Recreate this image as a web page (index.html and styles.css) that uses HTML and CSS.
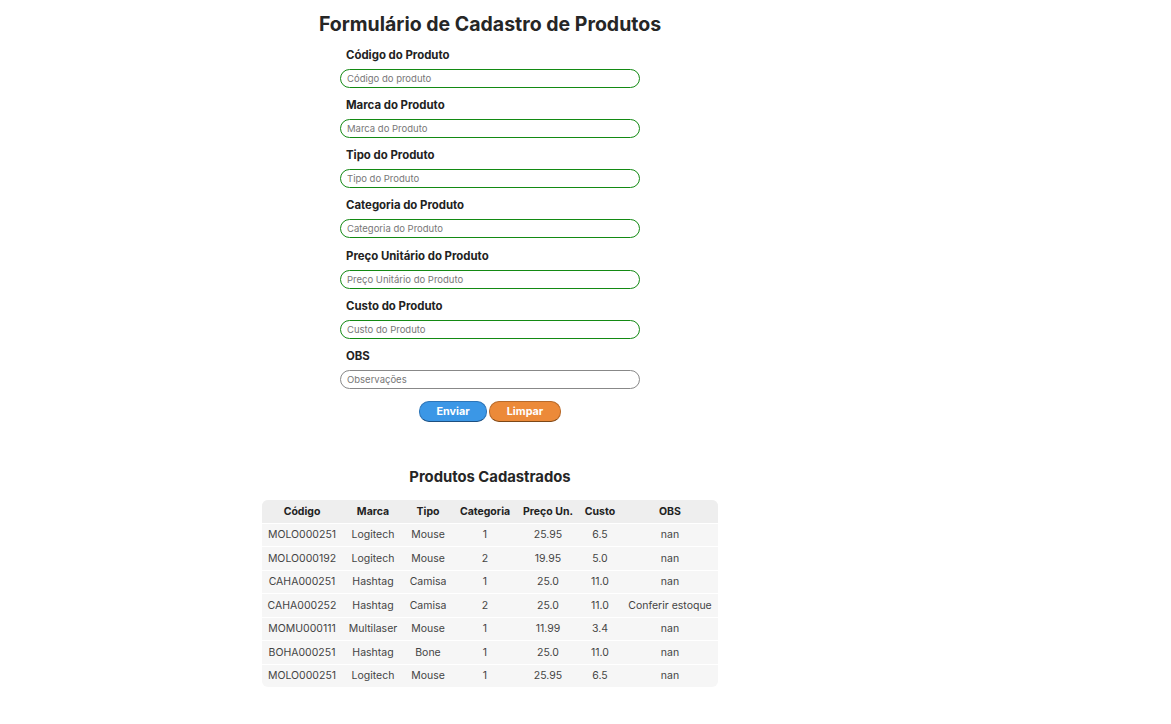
FILE: index.html
```html
<!DOCTYPE html>
<html lang="pt-BR">
<head>
<meta charset="utf-8">
<title>Formulário de Cadastro de Produtos</title>
<link rel="stylesheet" href="styles.css">
</head>
<body>
<main class="page">
  <h1 class="title">Formulário de Cadastro de Produtos</h1>
  <form class="form">
    <div class="field">
      <label class="label">Código do Produto</label>
      <input class="input valid" type="text" placeholder="Código do produto">
    </div>
    <div class="field">
      <label class="label">Marca do Produto</label>
      <input class="input valid" type="text" placeholder="Marca do Produto">
    </div>
    <div class="field">
      <label class="label">Tipo do Produto</label>
      <input class="input valid" type="text" placeholder="Tipo do Produto">
    </div>
    <div class="field">
      <label class="label">Categoria do Produto</label>
      <input class="input valid" type="text" placeholder="Categoria do Produto">
    </div>
    <div class="field">
      <label class="label">Preço Unitário do Produto</label>
      <input class="input valid" type="text" placeholder="Preço Unitário do Produto">
    </div>
    <div class="field">
      <label class="label">Custo do Produto</label>
      <input class="input valid" type="text" placeholder="Custo do Produto">
    </div>
    <div class="field">
      <label class="label">OBS</label>
      <input class="input" type="text" placeholder="Observações">
    </div>
    <div class="actions">
      <button type="button" class="btn btn-send">Enviar</button>
      <button type="button" class="btn btn-clear">Limpar</button>
    </div>
  </form>

  <h2 class="subtitle">Produtos Cadastrados</h2>
  <table class="table">
    <colgroup>
      <col style="width:80px"><col style="width:62px"><col style="width:48px"><col style="width:66px"><col style="width:60px"><col style="width:44px"><col style="width:96px">
    </colgroup>
    <thead>
      <tr><th>Código</th><th>Marca</th><th>Tipo</th><th>Categoria</th><th>Preço Un.</th><th>Custo</th><th>OBS</th></tr>
    </thead>
    <tbody>
      <tr><td>MOLO000251</td><td>Logitech</td><td>Mouse</td><td>1</td><td>25.95</td><td>6.5</td><td>nan</td></tr>
      <tr><td>MOLO000192</td><td>Logitech</td><td>Mouse</td><td>2</td><td>19.95</td><td>5.0</td><td>nan</td></tr>
      <tr><td>CAHA000251</td><td>Hashtag</td><td>Camisa</td><td>1</td><td>25.0</td><td>11.0</td><td>nan</td></tr>
      <tr><td>CAHA000252</td><td>Hashtag</td><td>Camisa</td><td>2</td><td>25.0</td><td>11.0</td><td>Conferir estoque</td></tr>
      <tr><td>MOMU000111</td><td>Multilaser</td><td>Mouse</td><td>1</td><td>11.99</td><td>3.4</td><td>nan</td></tr>
      <tr><td>BOHA000251</td><td>Hashtag</td><td>Bone</td><td>1</td><td>25.0</td><td>11.0</td><td>nan</td></tr>
      <tr><td>MOLO000251</td><td>Logitech</td><td>Mouse</td><td>1</td><td>25.95</td><td>6.5</td><td>nan</td></tr>
    </tbody>
  </table>
</main>
</body>
</html>
```
FILE: styles.css
```css
* { box-sizing: border-box; }
html, body { margin: 0; padding: 0; background: #fff; }
body {
  font-family: Inter, "Open Sans", "Liberation Sans", sans-serif;
  color: #222;
}
.page {
  width: 980px;
  display: flex;
  flex-direction: column;
  align-items: center;
  padding-top: 11px;
}
.title {
  margin: 0;
  font-size: 19.5px;
  line-height: 26px;
  font-weight: 700;
  color: #262626;
}
.form {
  width: 300px;
  display: flex;
  flex-direction: column;
  margin-top: 11px;
}
.field {
  display: flex;
  flex-direction: column;
  margin-bottom: 10.17px;
}
.label {
  font-size: 11.4px;
  line-height: 14px;
  font-weight: 700;
  padding-left: 6px;
  margin-bottom: 7px;
  color: #222;
}
.input {
  width: 300px;
  height: 19px;
  border: 1px solid #888;
  border-radius: 10px;
  padding: 0 6px;
  font-family: inherit;
  font-size: 9.5px;
  color: #333;
  background: #fff;
  outline: none;
}
.input.valid { border-color: #138a13; }
.input::placeholder { color: #777; }
.actions {
  display: flex;
  justify-content: center;
  gap: 2px;
  margin-top: 2px;
}
.btn {
  height: 21px;
  border-radius: 10px;
  font-family: inherit;
  font-size: 10.8px;
  font-weight: 700;
  color: #fff;
  padding: 0;
  cursor: pointer;
}
.btn-send {
  width: 68px;
  background: #3b97e6;
  border: 1px solid #2d75b8;
  border-bottom-color: #1d4f80;
}
.btn-clear {
  width: 72px;
  background: #ec8a39;
  border: 1px solid #b86a2a;
  border-bottom-color: #7d4818;
}
.subtitle {
  margin: 45px 0 0;
  font-size: 14.8px;
  line-height: 20px;
  font-weight: 700;
  color: #262626;
}
.table {
  margin-top: 13px;
  width: 456px;
  table-layout: fixed;
  border-collapse: separate;
  border-spacing: 0;
  background: #f6f6f6;
  border-radius: 6px;
  overflow: hidden;
  font-size: 10.5px;
}
.table th {
  background: #eeeeee;
  height: 22.5px;
  font-weight: 700;
  color: #222;
  text-align: center;
  padding: 0;
  white-space: nowrap;
}
.table td {
  height: 23.5px;
  border-top: 1.5px solid #fff;
  text-align: center;
  padding: 0;
  color: #444;
  white-space: nowrap;
}
```
